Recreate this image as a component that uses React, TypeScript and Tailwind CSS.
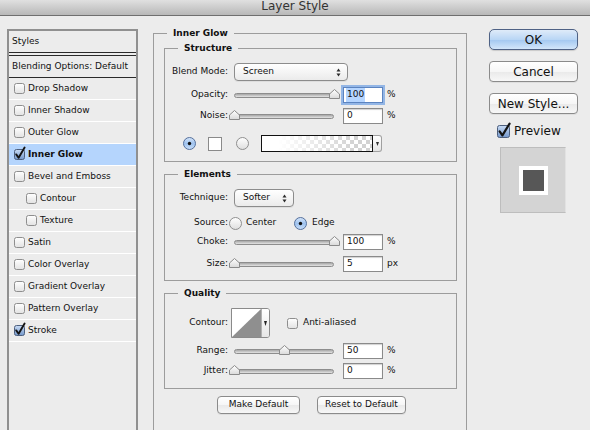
import React, { useId } from 'react';

type StyleItem = { label: string; checked?: boolean; active?: boolean; sub?: boolean };

const STYLE_ITEMS: StyleItem[] = [
  { label: 'Drop Shadow' },
  { label: 'Inner Shadow' },
  { label: 'Outer Glow' },
  { label: 'Inner Glow', checked: true, active: true },
  { label: 'Bevel and Emboss' },
  { label: 'Contour', sub: true },
  { label: 'Texture', sub: true },
  { label: 'Satin' },
  { label: 'Color Overlay' },
  { label: 'Gradient Overlay' },
  { label: 'Pattern Overlay' },
  { label: 'Stroke', checked: true },
];

function CheckBox({ checked = false }: { checked?: boolean }) {
  const id = useId();
  return (
    <svg width="11" height="11" viewBox="0 0 11 11" className="shrink-0 overflow-visible">
      <defs>
        <linearGradient id={`${id}-off`} x1="0" y1="0" x2="0" y2="1">
          <stop offset="0" stopColor="#ffffff" />
          <stop offset="1" stopColor="#e2e2e2" />
        </linearGradient>
        <linearGradient id={`${id}-on`} x1="0" y1="0" x2="0" y2="1">
          <stop offset="0" stopColor="#c9dcf5" />
          <stop offset="1" stopColor="#7397cb" />
        </linearGradient>
      </defs>
      <rect
        x="0.5"
        y="0.5"
        width="10"
        height="10"
        rx="2"
        fill={checked ? `url(#${id}-on)` : `url(#${id}-off)`}
        stroke={checked ? '#4d5f7d' : '#8e8e8e'}
      />
      {checked && (
        <path d="M2.2 5.4 L4.6 8.8 L10.6 -1.4" fill="none" stroke="#141414" strokeWidth="1.9" strokeLinecap="round" strokeLinejoin="round" />
      )}
    </svg>
  );
}

function Radio({ selected = false }: { selected?: boolean }) {
  const id = useId();
  return (
    <svg width="13" height="13" viewBox="0 0 13 13" className="shrink-0">
      <defs>
        <linearGradient id={`${id}-g`} x1="0" y1="0" x2="0" y2="1">
          {selected ? (
            <>
              <stop offset="0" stopColor="#d6e6fa" />
              <stop offset="0.5" stopColor="#9fc3ef" />
              <stop offset="1" stopColor="#c9def8" />
            </>
          ) : (
            <>
              <stop offset="0" stopColor="#ffffff" />
              <stop offset="1" stopColor="#dedede" />
            </>
          )}
        </linearGradient>
      </defs>
      <circle cx="6.5" cy="6.5" r="6" fill={`url(#${id}-g)`} stroke={selected ? '#56709c' : '#8e8e8e'} />
      {selected && <circle cx="6.5" cy="6.5" r="1.7" fill="#111" />}
    </svg>
  );
}

function UpDown() {
  return (
    <svg width="5" height="9" viewBox="0 0 5 9" className="shrink-0">
      <path d="M2.5 0.5 L4.5 3.5 H0.5 Z" fill="#2a2a2a" />
      <path d="M2.5 8.5 L4.5 5.5 H0.5 Z" fill="#2a2a2a" />
    </svg>
  );
}

function Thumb() {
  const id = useId();
  return (
    <svg width="11" height="10" viewBox="0 0 11 10">
      <defs>
        <linearGradient id={`${id}-t`} x1="0" y1="0" x2="0" y2="1">
          <stop offset="0" stopColor="#ffffff" />
          <stop offset="1" stopColor="#d9d9d9" />
        </linearGradient>
      </defs>
      <path d="M0.5 9.5 V5 L5.5 0.5 L10.5 5 V9.5 Z" fill={`url(#${id}-t)`} stroke="#8a8a8a" />
    </svg>
  );
}

function Slider({ value }: { value: number }) {
  return (
    <div className="relative flex h-[16px] w-[100px] shrink-0 items-center">
      <div className="h-[5px] w-full rounded-full border border-[#8d8d8d] bg-gradient-to-b from-[#a6a6a6] to-[#e4e4e4]" />
      <div className="absolute top-[2px]" style={{ left: `calc(${value}% - 5px)` }}>
        <Thumb />
      </div>
    </div>
  );
}

function NumberField({ text, focused = false }: { text: string; focused?: boolean }) {
  return (
    <div
      className={
        focused
          ? 'ml-[9px] flex h-[16px] w-[40px] shrink-0 items-center border border-[#5c84c0] bg-white pl-[2px] shadow-[0_0_0_2px_#93b6e6]'
          : 'ml-[9px] flex h-[16px] w-[40px] shrink-0 items-center border border-[#8a8a8a] bg-white pl-[3px] shadow-[inset_0_1px_1px_rgba(0,0,0,0.18)]'
      }
    >
      {focused ? <span className="bg-[#b5d5ff] px-[1px]">{text}</span> : <span>{text}</span>}
    </div>
  );
}

function SliderRow({ label, value, text, unit, focused }: { label: string; value: number; text: string; unit: string; focused?: boolean }) {
  return (
    <div className="flex h-[16px] items-center">
      <span className="mr-[6px] w-[63px] shrink-0 text-right">{label}</span>
      <Slider value={value} />
      <NumberField text={text} focused={focused} />
      <span className="ml-[4px]">{unit}</span>
    </div>
  );
}

function Group({ title, children, className }: { title: string; children: React.ReactNode; className?: string }) {
  return (
    <div className={`relative border border-[#9c9c9c] ${className ?? ''}`}>
      <span className="absolute -top-[7px] left-[13px] bg-[#ececec] px-[6px] font-bold leading-[12px]">{title}</span>
      {children}
    </div>
  );
}

function PushButton({ label, className }: { label: string; className: string }) {
  return (
    <div
      className={`flex items-center justify-center rounded-[4px] border border-[#8b8b8b] bg-[linear-gradient(#ffffff,#f6f6f6_50%,#e9e9e9_51%,#f7f7f7)] shadow-[0_1px_0_rgba(0,0,0,0.06)] ${className}`}
    >
      {label}
    </div>
  );
}

export default function App() {
  return (
    <div className="h-[430px] w-[590px] overflow-hidden bg-[#ececec] font-['DejaVu_Sans',sans-serif] text-[9px] text-[#111]">
      {/* title bar */}
      <div className="flex h-[16px] items-start justify-center border-b border-[#6f6f6f] bg-gradient-to-b from-[#e0e0e0] to-[#b8b8b8]">
        <span className="text-[12px] leading-[12px] text-[#333]">Layer Style</span>
      </div>

      <div className="flex pt-[13px]">
        {/* styles list */}
        <div className="ml-[7px] h-[420px] w-[131px] shrink-0 border-2 border-[#909090] bg-[#ececec]">
          <div className="flex h-[21px] items-center pl-[3px]">Styles</div>
          <div className="h-[4px] border-y border-[#2a2a2a]" />
          <div className="flex h-[22px] items-center border-b border-[#2a2a2a] pl-[3px]">Blending Options: Default</div>
          {STYLE_ITEMS.map((it) => (
            <div
              key={it.label}
              className={`flex h-[22px] items-center gap-[3px] border-b border-white ${it.sub ? 'pl-[17px]' : 'pl-[5px]'} ${it.active ? 'bg-[#b5d5fd] font-bold' : ''}`}
            >
              <CheckBox checked={it.checked} />
              <span>{it.label}</span>
            </div>
          ))}
        </div>

        {/* main settings */}
        <div className="ml-[15px] w-[314px] shrink-0 pt-[4px]">
          <Group title="Inner Glow" className="h-[420px] pt-[14px]">
            <Group title="Structure" className="ml-[10px] w-[293px] pt-[14px] pb-[9px]">
              <div className="flex h-[18px] items-center">
                <span className="mr-[6px] w-[63px] shrink-0 text-right">Blend Mode:</span>
                <div className="flex h-[18px] w-[114px] items-center justify-between rounded-[4px] border border-[#8c8c8c] bg-gradient-to-b from-white to-[#ebebeb] pl-[8px] pr-[6px] shadow-[0_1px_0_rgba(0,0,0,0.06)]">
                  <span>Screen</span>
                  <UpDown />
                </div>
              </div>
              <div className="mt-[6px]">
                <SliderRow label="Opacity:" value={100} text="100" unit="%" focused />
              </div>
              <div className="mt-[5px]">
                <SliderRow label="Noise:" value={0} text="0" unit="%" />
              </div>
              <div className="mt-[11px] flex h-[17px] items-center pl-[18px]">
                <Radio selected />
                <div className="ml-[12px] h-[14px] w-[14px] border border-[#8a8a8a] bg-white" />
                <div className="ml-[14px]">
                  <Radio />
                </div>
                <div className="ml-[12px] flex h-[17px]">
                  <div className="h-[17px] w-[112px] border border-[#111] bg-[linear-gradient(to_right,#ffffff_15%,rgba(255,255,255,0)_85%),repeating-conic-gradient(#d2d2d2_0%_25%,#ffffff_0%_50%)] bg-[length:100%_100%,8px_8px]" />
                  <div className="flex h-[17px] w-[9px] items-center justify-center rounded-r-[3px] border border-l-0 border-[#a0a0a0] bg-gradient-to-b from-white to-[#e6e6e6]">
                    <svg width="3" height="4" viewBox="0 0 3 4">
                      <path d="M0 0 H3 L1.5 4 Z" fill="#333" />
                    </svg>
                  </div>
                </div>
              </div>
            </Group>

            <Group title="Elements" className="ml-[10px] mt-[12px] w-[293px] pt-[14px] pb-[8px]">
              <div className="flex h-[18px] items-center">
                <span className="mr-[6px] w-[63px] shrink-0 text-right">Technique:</span>
                <div className="flex h-[18px] w-[60px] items-center justify-between rounded-[4px] border border-[#8c8c8c] bg-gradient-to-b from-white to-[#ebebeb] pl-[8px] pr-[6px] shadow-[0_1px_0_rgba(0,0,0,0.06)]">
                  <span>Softer</span>
                  <UpDown />
                </div>
              </div>
              <div className="mt-[9px] flex h-[14px] items-center">
                <span className="mr-[1px] w-[63px] shrink-0 text-right">Source:</span>
                <Radio />
                <span className="ml-[4px] w-[48px]">Center</span>
                <Radio selected />
                <span className="ml-[5px]">Edge</span>
              </div>
              <div className="mt-[4px]">
                <SliderRow label="Choke:" value={100} text="100" unit="%" />
              </div>
              <div className="mt-[6px]">
                <SliderRow label="Size:" value={0} text="5" unit="px" />
              </div>
            </Group>

            <Group title="Quality" className="ml-[10px] mt-[12px] w-[293px] pt-[14px] pb-[9px]">
              <div className="flex h-[30px] items-center">
                <span className="mr-[3px] w-[63px] shrink-0 text-right">Contour:</span>
                <div className="flex h-[30px] w-[39px] overflow-hidden rounded-r-[3px] border border-[#8a8a8a] bg-white">
                  <svg width="29" height="28" viewBox="0 0 29 28" className="shrink-0">
                    <path d="M0 28 L29 0 V28 Z" fill="#8f8f8f" />
                  </svg>
                  <div className="flex w-[9px] items-center justify-center border-l border-[#b0b0b0] bg-gradient-to-b from-white to-[#e6e6e6]">
                    <svg width="3" height="5" viewBox="0 0 3 5">
                      <path d="M0 0 H3 L1.5 5 Z" fill="#222" />
                    </svg>
                  </div>
                </div>
                <div className="ml-[17px] flex items-center gap-[5px]">
                  <CheckBox />
                  <span>Anti-aliased</span>
                </div>
              </div>
              <div className="mt-[5px]">
                <SliderRow label="Range:" value={50} text="50" unit="%" />
              </div>
              <div className="mt-[4px]">
                <SliderRow label="Jitter:" value={0} text="0" unit="%" />
              </div>
            </Group>

            <div className="mt-[7px] flex gap-[17px] pl-[63px]">
              <PushButton label="Make Default" className="h-[18px] w-[83px]" />
              <PushButton label="Reset to Default" className="h-[18px] w-[89px]" />
            </div>
          </Group>
        </div>

        {/* buttons + preview */}
        <div className="ml-[22px] w-[89px] shrink-0 text-[12px]">
          <div className="flex h-[21px] items-center justify-center rounded-[5px] border border-[#4f6285] bg-[linear-gradient(#dfebf9,#b9d6f5_50%,#a2c7f0_51%,#d3e6fa)] shadow-[0_1px_1px_rgba(0,0,0,0.15)]">
            OK
          </div>
          <PushButton label="Cancel" className="mt-[11px] h-[21px]" />
          <PushButton label="New Style..." className="mt-[11px] h-[21px]" />
          <div className="ml-[8px] mt-[10px] flex h-[14px] items-center gap-[4px]">
            <svg width="13" height="13" viewBox="0 0 13 13" className="shrink-0 overflow-visible">
              <defs>
                <linearGradient id="pv-on" x1="0" y1="0" x2="0" y2="1">
                  <stop offset="0" stopColor="#c9dcf5" />
                  <stop offset="1" stopColor="#7397cb" />
                </linearGradient>
              </defs>
              <rect x="0.5" y="0.5" width="12" height="12" rx="2" fill="url(#pv-on)" stroke="#4d5f7d" />
              <path d="M2.6 6.4 L5.4 10.4 L12.6 -1.4" fill="none" stroke="#141414" strokeWidth="2.2" strokeLinecap="round" strokeLinejoin="round" />
            </svg>
            <span>Preview</span>
          </div>
          <div className="ml-[11px] mt-[9px] flex h-[66px] w-[66px] items-center justify-center border border-[#bdbdbd] border-r-[#e2e2e2] bg-[#d4d4d4]">
            <div className="flex h-[29px] w-[29px] items-center justify-center bg-white">
              <div className="h-[21px] w-[21px] bg-[#575757]" />
            </div>
          </div>
        </div>
      </div>
    </div>
  );
}
